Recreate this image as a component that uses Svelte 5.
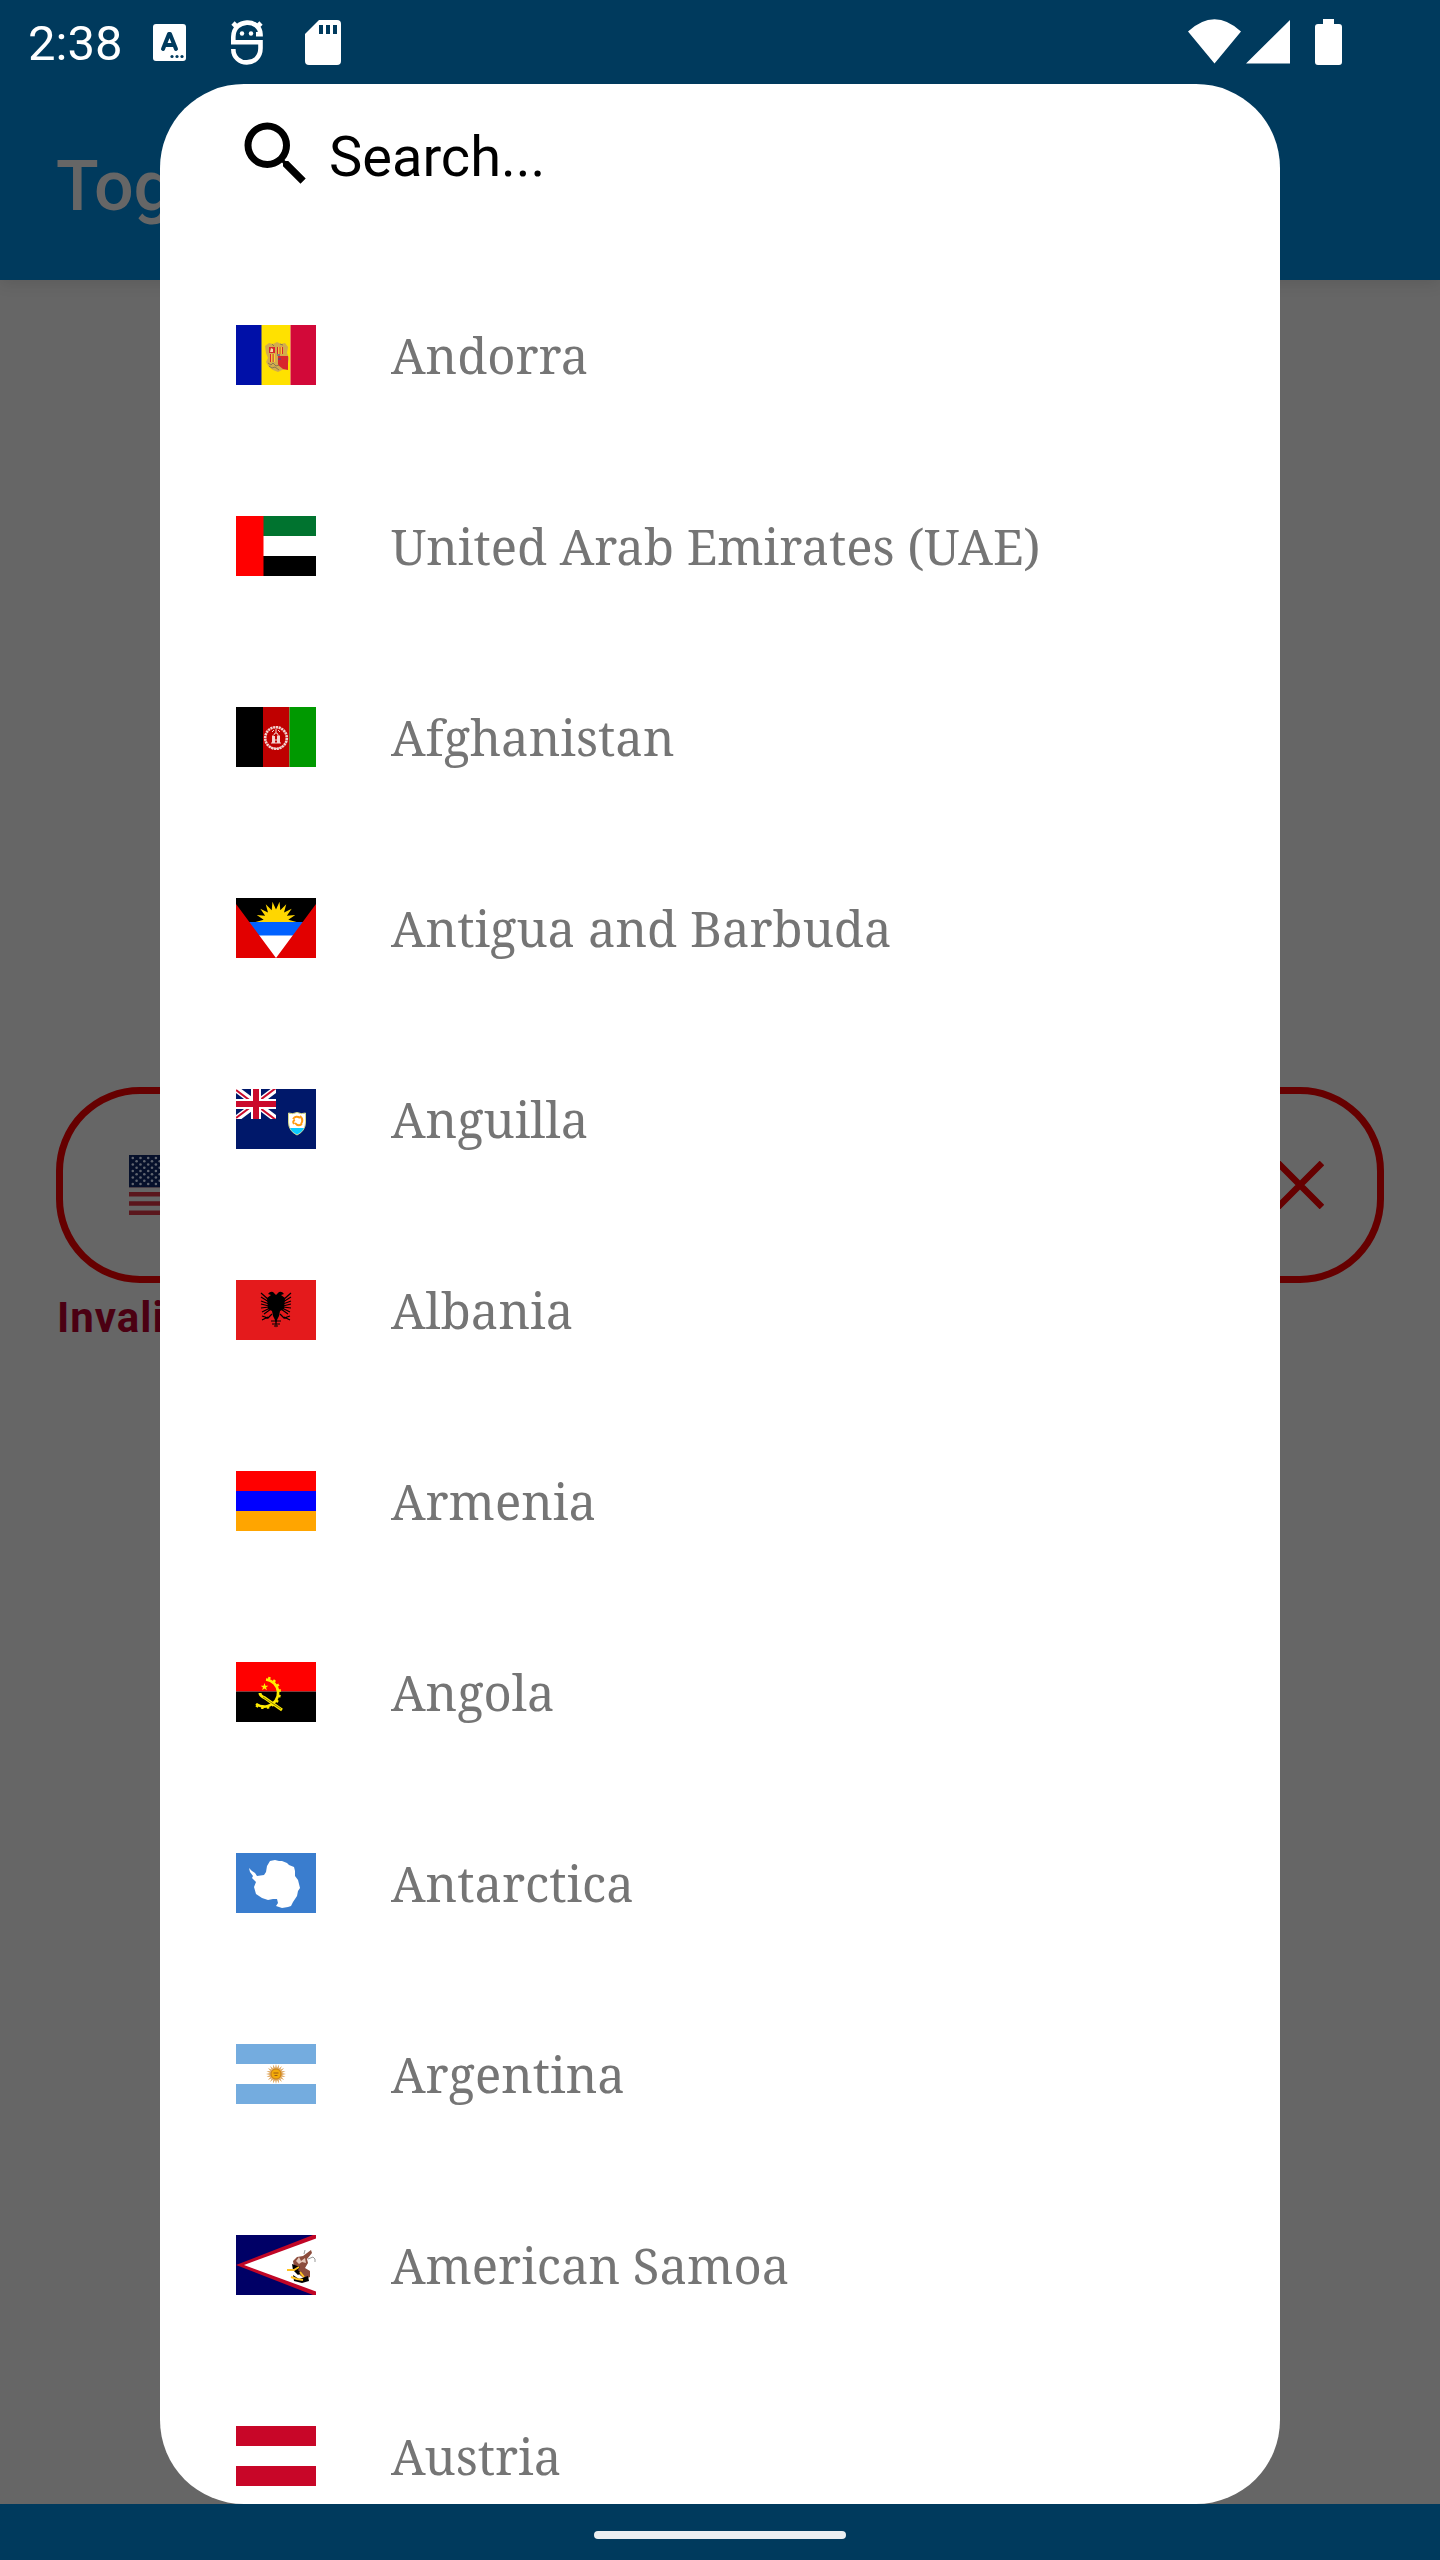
<script>
  let query = $state('');
  const countries = [
    ['ad', 'Andorra'],
    ['ae', 'United Arab Emirates (UAE)'],
    ['af', 'Afghanistan'],
    ['ag', 'Antigua and Barbuda'],
    ['ai', 'Anguilla'],
    ['al', 'Albania'],
    ['am', 'Armenia'],
    ['ao', 'Angola'],
    ['aq', 'Antarctica'],
    ['ar', 'Argentina'],
    ['as', 'American Samoa'],
    ['at', 'Austria']
  ];
  const shown = $derived(countries.filter(([, name]) => name.toLowerCase().includes(query.toLowerCase())));

  const burst = (n, outer, inner, from = 0, span = 2 * Math.PI) =>
    Array.from({ length: n * 2 + 1 }, (_, i) => {
      const a = from + (i * span) / (n * 2);
      const r = i % 2 ? inner : outer;
      return `${(Math.cos(a) * r).toFixed(2)},${(Math.sin(a) * r).toFixed(2)}`;
    }).join(' ');
  const stars = [];
  for (let row = 0; row < 9; row++) {
    for (let col = 0; col < (row % 2 ? 5 : 6); col++) {
      stars.push([3.8 + col * 7.7 + (row % 2 ? 3.8 : 0), 3 + row * 3.25]);
    }
  }
</script>

{#snippet flag(code)}
  <svg class="flag" viewBox="0 0 80 60" aria-hidden="true">
    {#if code === 'ad'}
      <path fill="#0010a8" d="M0 0h26v60H0z" /><path fill="#ffe100" d="M25.500 0h29v60h-29z" /><path fill="#d20939" d="M54.500 0H80v60H54.500z" />
      <path fill="#d3ac4c" d="M29 21l4-3 4 1 4-2 4 2 4-1 3 4-1 6 2 5-2 11-5 1-4 2-5-2-4-3-3-5 2-4-2-5z" />
      <path fill="#d8272c" d="M33 22h6v6h-6zM42 31h10v14l-5-1-5-4z" />
      <path fill="#f4d9a0" d="M35 23l2 1v3h-3z" />
      <path stroke="#d8272c" d="M41.500 22v7M44 22v7M46.500 22v7M34.500 29v8M37 29v8" />
      <path stroke="#ffd531" d="M42.800 22v7M45.300 22v7M35.800 29v8M38.500 29v8" />
      <path stroke="#8a7a50" fill="none" d="M32 38l3 2 2-2 3 3 3-1M33 41l3 2 3-1 4 3M36 19l2 2M44 19l3 1" />
      <path stroke="#3d4d9b" d="M41 30h3M42 34h3" />
    {:else if code === 'ae'}
      <path fill="#fff" d="M0 0h80v60H0z" /><path fill="#00732f" d="M27 0h53v20H27z" /><path d="M27 40h53v20H27z" /><path fill="red" d="M0 0h27.500v60H0z" />
    {:else if code === 'af'}
      <path d="M0 0h27v60H0z" /><path fill="#bf0000" d="M27 0h26.500v60H27z" /><path fill="#090" d="M53.500 0H80v60H53.500z" />
      <g fill="none" stroke="#f3d3d0">
        <circle cx="40" cy="31" r="10.800" stroke-width="2.600" stroke-dasharray="2.200 .6" />
        <path d="M35 36h10M36 33h8M37 28v7M43 28v7M38 28a2 2 0 014 0v6M40 22v4M36 25l2-2M44 25l-2-2M33 39q7 5 14 0" />
      </g>
      <path fill="#f3d3d0" d="M36 29h3v7h-3zM41 29h3v7h-3z" />
    {:else if code === 'ag'}
      <path d="M0 0h80v60H0z" />
      <polygon fill="#ffd600" transform="translate(40 24)" points={burst(9, 20.500, 12.500, Math.PI, Math.PI)} />
      <path fill="#0061ff" d="M8 24h64v14H8z" /><path fill="#fff" d="M14 37.500h52V60H14z" /><path fill="#e20000" d="M0 6l40 54H0zM80 6L40 60h40z" />
    {:else if code === 'ai'}
      <path fill="#00186a" d="M0 0h80v60H0z" />
      <svg width="40" height="30" viewBox="0 0 40 30">
        <path stroke="#fff" stroke-width="6.500" d="M0 0l40 30M40 0L0 30" />
        <path stroke="#cb0a2c" stroke-width="2" d="M0 1l40 30M40 -1L0 29" />
        <path stroke="#fff" stroke-width="10" d="M20 0v30M0 15h40" /><path stroke="#cb0a2c" stroke-width="6" d="M20 0v30M0 15h40" />
      </svg>
      <path fill="#fff" stroke="#d5d88a" d="M52.500 24q4 1.500 8.500-.500 4.500 2 8.500.500v9q0 9-8.500 13-8.500-4-8.500-13z" />
      <path fill="#0bcbff" d="M54 39h14q-2 4-7 6.500-5-2.500-7-6.500z" />
      <path fill="none" stroke="#ff9a12" stroke-width="2" d="M57 30q3-4 7-1M64 27q4 4 1 8M66 35q-4 3-7-1M58 35q-2-3 1-4" />
    {:else if code === 'al'}
      <path fill="#e41a1c" d="M0 0h80v60H0z" />
      <path d="M40 15l-3-3q-3-1-5 2l3 1-4 3 1 11 4 2 1 5 2 4 1 8 1-8 2-4 1-5 4-2 1-11-4-3 3-1q-2-3-5-2z" />
      <path fill="none" stroke="#000" stroke-width="1.200" d="M33 20l-8-7M33 22l-8-5M33 24l-8-3M33 26l-8-2M33 27l-8 1M34 28l-8 4M35 29l-7 5M47 20l8-7M47 22l8-5M47 24l8-3M47 26l8-2M47 27l8 1M46 28l8 4M45 29l7 5M36 34l-4 4-6-2M32 37l-6 3M44 34l4 4 6-2M48 37l6 3M35 41h10M36 44h8M38 46h4" />
    {:else if code === 'am'}
      <path fill="red" d="M0 0h80v20H0z" /><path fill="#00f" d="M0 20h80v20H0z" /><path fill="#ffa500" d="M0 40h80v20H0z" />
    {:else if code === 'ao'}
      <path fill="red" d="M0 0h80v29.500H0z" /><path d="M0 29.500h80V60H0z" />
      <g fill="none" stroke="#ffec00">
        <path stroke-width="2.600" d="M30 17.500A13.500 13.500 0 0132 44Q26 46 20 42" />
        <path stroke-width="3.500" stroke-dasharray="2.400 3" d="M32 16.500A14.500 14.500 0 0133 44.500Q26 47 19 42" />
        <path stroke-width="3" d="M24 31q0 3 5 5l17 12" />
      </g>
      <path stroke="#706800" stroke-width=".8" d="M27 35l18 12" />
      <polygon fill="#ffec00" transform="translate(28.500 25)" points={burst(5, 4, 1.600, -Math.PI / 2)} />
    {:else if code === 'aq'}
      <path fill="#3a7dce" d="M0 0h80v60H0z" />
      <path fill="#fff" d="M13 15L16 18 19 20 21 23 28 22 30 19 31 13 34 8 39 7 43 8 46 8 51 10 53 12 58 14 59 18 59 23 62 27 64 35 62 38 61 43 57 49 55 53 52 54 46 55 40 53 42 50 41 46 37 46 32 47 26 45 20 41 18 34 20 29 16 25 17 23 14 19z" />
    {:else if code === 'ar'}
      <path fill="#fff" d="M0 0h80v60H0z" /><path fill="#74acdf" d="M0 0h80v20H0zM0 40h80v20H0z" />
      <g transform="translate(40 30)">
        <polygon fill="#dfa75e" points={burst(20, 10, 6)} /><circle r="5" fill="#f3ab0a" stroke="#c98018" />
        <path stroke="#a05b10" d="M-2.500-1h5M-1.500 1.500h3" />
      </g>
    {:else if code === 'as'}
      <path fill="#006" d="M0 0h80v60H0z" /><path fill="#c10626" d="M0 30L77 0h3v60h-3z" /><path fill="#fff" d="M8 30L80 3.500v53z" />
      <path fill="#8c4c3c" d="M57 26l4-4 6-1 8-6 1 3-5 6 1 4-3 5 5 3v6l-5 2-8-6-3-6z" />
      <path fill="#e6c6b8" d="M60 26l3-4 2 4 4-3 1 5-4-1-3 2z" />
      <path d="M56 29l8 3-2 3 3 3-3 2-5-5zM57 40l6 4 9-3 1 5-7 2-8-2z" />
      <path fill="none" stroke="#ffc221" stroke-width="2" d="M51 35h7l5-3M55 42l6 2 6 1M64 37l4 5" />
      <path fill="none" stroke="#999" d="M72 24l5-2 2 2v3M69 15l-1 4" />
    {:else if code === 'at'}
      <path fill="#fff" d="M0 0h80v60H0z" /><path fill="#c80628" d="M0 0h80v20H0zM0 40h80v20H0z" />
    {:else if code === 'us'}
      <path fill="#666" d="M0 0h80v60H0z" />
      <path stroke="#5a161c" stroke-width="4.600" d="M0 2.300h80M0 11.500h80M0 20.800h80M0 30h80M0 39.200h80M0 48.500h80M0 57.700h80" />
      <path fill="#06102b" d="M0 0h46v32.300H0z" />
      {#each stars as [x, y]}<circle cx={x} cy={y} r="1.300" fill="#606570" />{/each}
    {/if}
  </svg>
{/snippet}

<div class="screen">
  <div class="status">
    <time>2:38</time>
    <svg class="note" viewBox="0 0 33 37" aria-hidden="true">
      <rect width="33" height="37" rx="3" fill="#fff" />
      <path fill="none" stroke="#003a5d" stroke-width="4" stroke-linecap="round" stroke-linejoin="round" d="M10 25l6-15h1l6 15M12 21h9" />
      <g fill="#003a5d"><circle cx="19" cy="32.500" r="1.600" /><circle cx="24" cy="32.500" r="1.600" /><circle cx="29" cy="32.500" r="1.600" /></g>
    </svg>
    <svg class="droid" viewBox="0 0 32 45" aria-hidden="true">
      <path fill="none" stroke="#fff" stroke-width="4.600" d="M25 14.200h4.500C29-1.700 2.500-1.700 2.300 17v5.300h27.200v6c0 18.700-27.200 18.700-27.200.7M6 7L2 3M26 7l4-4" />
      <circle cx="11" cy="13.500" r="2.200" fill="#fff" /><circle cx="20" cy="13.500" r="2.200" fill="#fff" />
    </svg>
    <svg class="card" viewBox="0 0 36 45" aria-hidden="true">
      <path fill="#fff" d="M14 0h18a4 4 0 014 4v37a4 4 0 01-4 4H4a4 4 0 01-4-4V14z" />
      <path fill="#003a5d" d="M14 5h4v9h-4zM21 5h4v9h-4zM28 5h4v9h-4z" />
    </svg>
    <svg class="system" viewBox="0 0 154 46" fill="#fff" aria-hidden="true">
      <path d="M0 12.500Q26.500-12 53 12.500L26.500 44.500zM58 44.500L102 1v43.500zM135 0h11v5h5a3 3 0 013 3v35a3 3 0 01-3 3h-21a3 3 0 01-3-3V8a3 3 0 013-3h5z" />
    </svg>
  </div>
  <header><h1>Toggle</h1></header>
  <main>
    <div class="phone">
      {@render flag('us')}
      <button class="clear" aria-label="Clear">
        <svg viewBox="0 0 48 48" aria-hidden="true"><path d="M2 2l44 44M46 2L2 46" stroke="#600" stroke-width="6.500" /></svg>
      </button>
    </div>
    <p class="error">Invalid</p>
  </main>
  <footer><span></span></footer>

  <div class="dialog" role="dialog" aria-label="Countries">
    <label class="search">
      <svg viewBox="0 0 24 24" aria-hidden="true"><path d="M15.500 14h-.79l-.28-.27A6.471 6.471 0 0016 9.500 6.500 6.500 0 109.500 16c1.610 0 3.090-.59 4.230-1.570l.27.28v.79l5 4.990L20.490 19l-4.990-5zm-6 0C7.010 14 5 11.990 5 9.500S7.010 5 9.500 5 14 7.010 14 9.500 11.990 14 9.500 14z" /></svg>
      <input type="text" placeholder="Search..." aria-label="Search" bind:value={query} />
    </label>
    <ul>
      {#each shown as [code, name] (code)}
        <li><button>{@render flag(code)}<span>{name}</span></button></li>
      {/each}
    </ul>
  </div>
</div>

<style>
  :global(body) { background: #666; }
  .screen {
    position: relative;
    display: flex;
    flex-direction: column;
    height: 100vh;
    overflow: hidden;
    background: #666;
    font-family: Roboto, sans-serif;
  }
  svg { display: block; flex: none; }
  button { border: 0; padding: 0; background: none; font: inherit; color: inherit; }
  .status {
    position: relative;
    z-index: 1;
    display: flex;
    align-items: center;
    flex: none;
    height: 84px;
    padding: 0 98px 0 28px;
    box-sizing: border-box;
    background: #003a5d;
    color: #fff;
  }
  time { width: 125px; padding-top: 4px; font-size: 49px; line-height: 80px; }
  .note { width: 33px; height: 37px; margin-right: 45px; }
  .droid { width: 32px; height: 45px; margin-right: 42px; }
  .card { width: 36px; height: 45px; }
  .system { width: 154px; height: 46px; margin-left: auto; }
  header {
    position: relative;
    display: flex;
    align-items: center;
    flex: none;
    height: 196px;
    padding: 8px 56px 0;
    box-sizing: border-box;
    background: #003a5d;
    box-shadow: 0 4px 14px rgba(0, 0, 0, .1);
  }
  h1 { margin: 0; font-size: 70px; font-weight: 500; line-height: 84px; color: #666; }
  main { display: flex; flex-direction: column; justify-content: center; flex: 1; padding: 0 56px 352px; }
  .phone {
    display: flex;
    align-items: center;
    justify-content: space-between;
    height: 196px;
    padding: 0 53px 0 66px;
    box-sizing: border-box;
    border: 7px solid #600;
    border-radius: 84px;
  }
  .clear svg { width: 48px; height: 48px; }
  .error { margin: 8px 0 0; padding-left: 1px; font-size: 42px; line-height: 54px; font-weight: 700; letter-spacing: 1px; color: #4b0012; }
  footer { display: flex; align-items: center; justify-content: center; flex: none; height: 56px; padding-top: 6px; box-sizing: border-box; background: #003a5d; }
  footer span { width: 252px; height: 8px; border-radius: 4px; background: #ebeff2; }
  .dialog {
    position: absolute;
    z-index: 2;
    inset: 84px 160px 56px;
    display: flex;
    flex-direction: column;
    overflow: hidden;
    border-radius: 84px;
    background: #fff;
  }
  .search { display: flex; align-items: center; flex: none; height: 140px; padding: 0 74px; margin-bottom: 36px; }
  .search svg { width: 84px; height: 84px; }
  input {
    flex: 1;
    min-width: 0;
    padding: 6px 0 0 11px;
    border: 0;
    outline: 0;
    background: none;
    color: #000;
    font: 56px/84px Roboto, sans-serif;
  }
  input::placeholder { color: #000; opacity: 1; }
  ul { flex: 1; min-height: 0; margin: 0; padding: 0; overflow: hidden; list-style: none; }
  li { height: 191px; }
  li button {
    display: flex;
    align-items: center;
    gap: 75px;
    width: 100%;
    height: 190px;
    padding: 0 76px;
    color: #757575;
    font-family: "Noto Serif", "DejaVu Serif", serif;
    font-size: 49px;
    line-height: 68px;
    text-align: left;
    white-space: nowrap;
  }
  .flag { width: 80px; height: 60px; }
</style>
